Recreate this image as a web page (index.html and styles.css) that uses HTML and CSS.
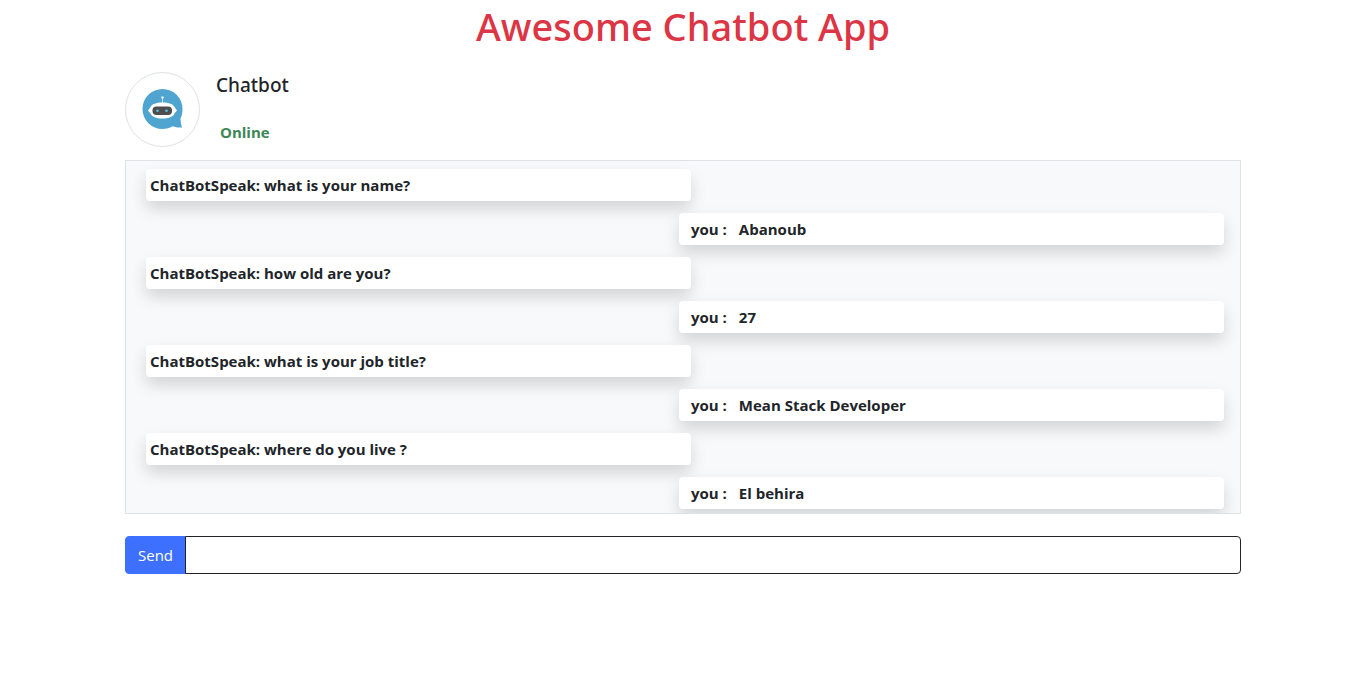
FILE: index.html
```html
<!DOCTYPE html>
<html lang="en">
<head>
<meta charset="utf-8">
<meta name="viewport" content="width=device-width, initial-scale=1">
<title>Awesome Chatbot App</title>
<link rel="stylesheet" href="styles.css">
</head>
<body>
<main class="container">
  <h1 class="title">Awesome Chatbot App</h1>
  <header class="profile">
    <div class="avatar">
      <svg class="avatar-icon" viewBox="0 1 42 42" role="img" aria-label="Chatbot">
        <path d="M20.500 1A20 20 0 1 0 20.500 41C24.500 41 27.500 40 30.500 38.200C33.500 39.400 37 39.800 40 39.500C39 36.500 38.600 33.500 38.500 30.500C40 27.500 40.500 24.500 40.500 21A20 20 0 0 0 20.500 1Z" fill="#50a4d0"/>
        <path d="M20.500 10V15" stroke="#bfe3f3" stroke-width="1"/>
        <circle cx="20.500" cy="9.500" r="1.300" fill="#e4f5fc"/>
        <path d="M6 22.500L8.500 19C10 16 14 14.500 20.500 14.500S31 16 32.500 19L35 22.500L32.500 25.500C31 29 27 30.500 20.500 30.500S10 29 8.500 25.500Z" fill="#fff"/>
        <rect x="10.500" y="18.500" width="19.500" height="8.500" rx="4" fill="#4d4d50"/>
        <circle cx="15.500" cy="22.700" r="1.300" fill="#58bde5"/>
        <circle cx="24.500" cy="22.700" r="1.300" fill="#58bde5"/>
      </svg>
    </div>
    <div class="identity">
      <h2 class="name">Chatbot</h2>
      <p class="status">Online</p>
    </div>
  </header>
  <section class="messages" aria-label="Conversation">
    <p class="message">ChatBotSpeak: what is your name?</p>
    <p class="message mine"><span>you :</span><span>Abanoub</span></p>
    <p class="message">ChatBotSpeak: how old are you?</p>
    <p class="message mine"><span>you :</span><span>27</span></p>
    <p class="message">ChatBotSpeak: what is your job title?</p>
    <p class="message mine"><span>you :</span><span>Mean Stack Developer</span></p>
    <p class="message">ChatBotSpeak: where do you live ?</p>
    <p class="message mine"><span>you :</span><span>El behira</span></p>
  </section>
  <form class="composer">
    <button class="send" type="button">Send</button>
    <input class="entry" type="text" aria-label="Message">
  </form>
</main>
</body>
</html>
```
FILE: styles.css
```css
*, *::before, *::after {
  box-sizing: border-box;
}

body {
  margin: 0;
  background: #fff;
  color: #212529;
  font-family: "Open Sans", "Noto Sans", sans-serif;
  font-size: 15px;
  line-height: 24px;
}

h1, h2, p {
  margin: 0;
}

.container {
  max-width: 1140px;
  margin: 0 auto;
  padding: 0 12px;
}

.title {
  margin: 2px 0 22px;
  color: #dc3545;
  font-family: "Noto Sans", "Open Sans", sans-serif;
  font-size: 38px;
  font-weight: 500;
  line-height: 48px;
  text-align: center;
}

.profile {
  display: flex;
  gap: 16px;
  margin-bottom: 13px;
}

.avatar {
  display: flex;
  align-items: center;
  justify-content: center;
  width: 75px;
  height: 75px;
  border: 1px solid #dee2e6;
  border-radius: 50%;
}

.avatar-icon {
  width: 42px;
  height: 42px;
}

.identity {
  display: flex;
  flex-direction: column;
  justify-content: space-between;
  padding: 1px 0 3px;
}

.name {
  font-family: "Noto Sans", "Open Sans", sans-serif;
  font-size: 19px;
  font-weight: 500;
  line-height: 24px;
}

.status {
  padding-left: 4px;
  color: #3d8756;
  font-weight: 700;
}

.messages {
  display: flex;
  flex-direction: column;
  gap: 12px;
  margin-bottom: 22px;
  padding: 8px 16px 4px 20px;
  overflow: hidden;
  border: 1px solid #dee2e6;
  background: #f8f9fa;
}

.message {
  width: calc(50% + 6px);
  padding: 4px;
  border-radius: 4px;
  background: #fff;
  box-shadow: 0 8px 16px rgba(0, 0, 0, 0.15);
  font-weight: 700;
}

.mine {
  display: flex;
  gap: 12px;
  align-self: flex-end;
  padding: 4px 12px;
}

.composer {
  display: flex;
}

.send, .entry {
  height: 38px;
  font: inherit;
}

.send {
  padding: 6px 12px;
  border: 1px solid #3d70ff;
  border-radius: 4px 0 0 4px;
  background: #3d70ff;
  color: #fff;
}

.entry {
  flex: 1;
  min-width: 0;
  margin-left: -1px;
  padding: 6px 12px;
  border: 1px solid #212529;
  border-radius: 0 4px 4px 0;
  background: #fff;
  color: #212529;
}
```
